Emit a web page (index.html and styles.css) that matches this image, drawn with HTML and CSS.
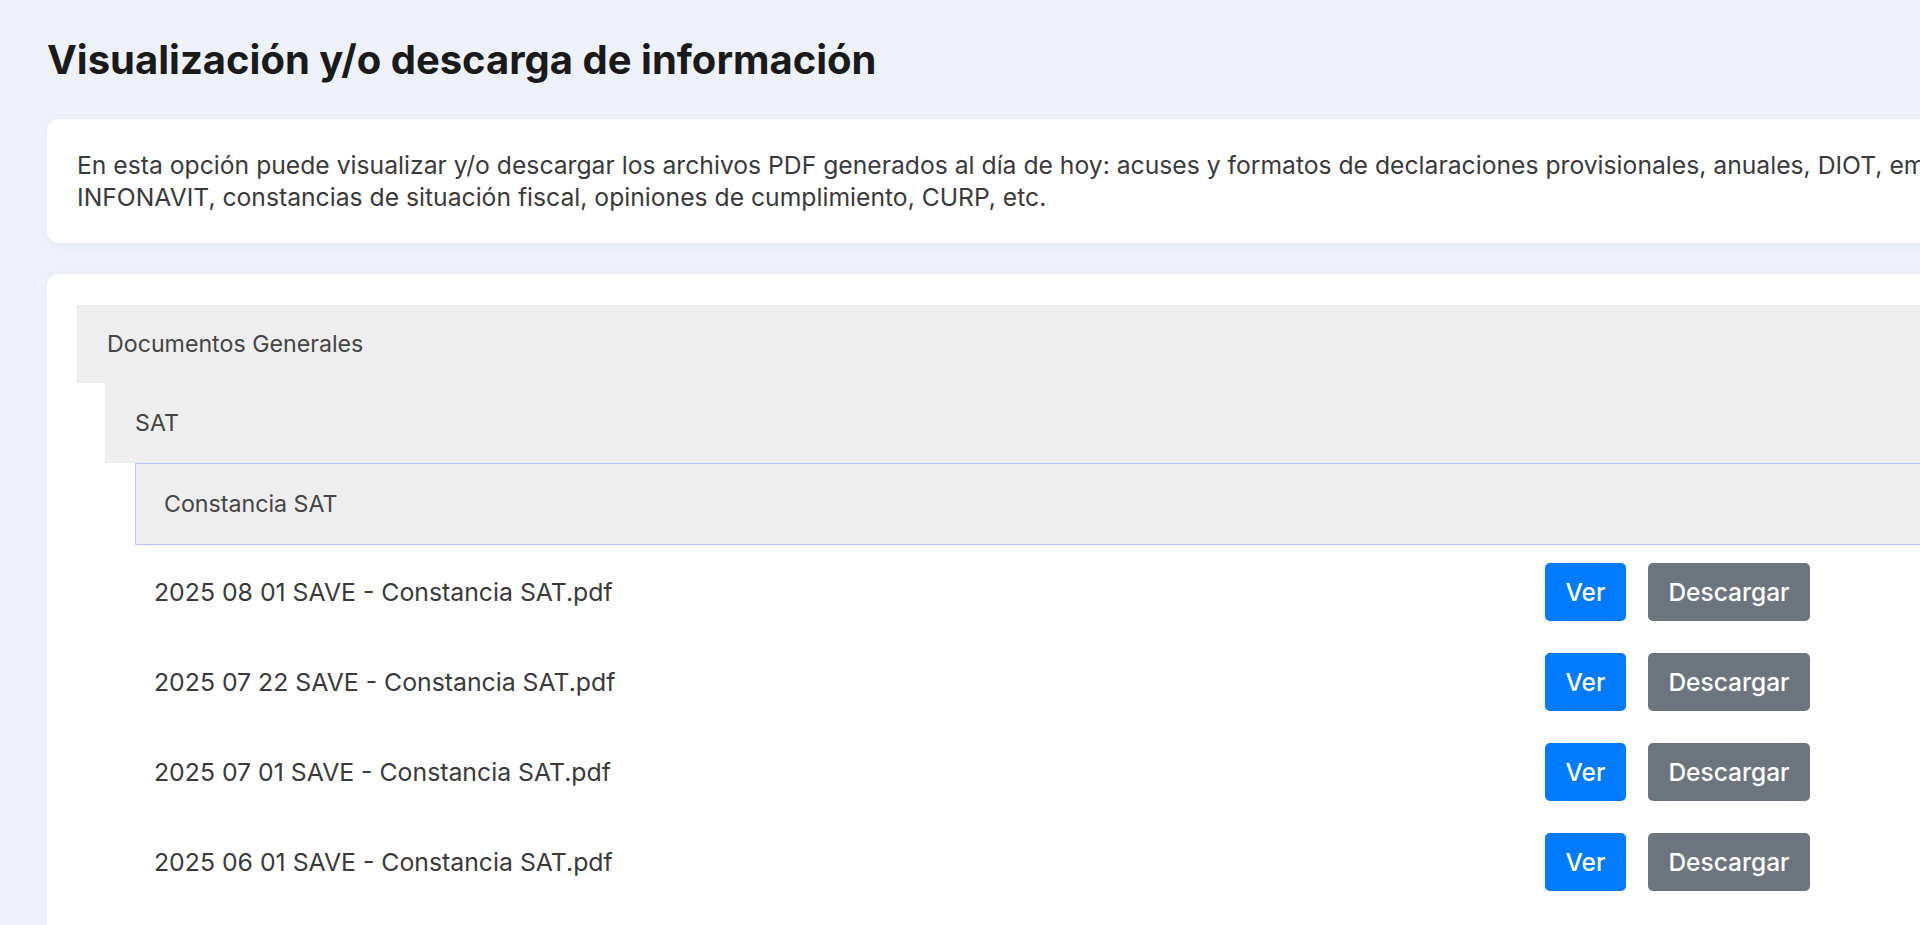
FILE: index.html
```html
<!DOCTYPE html>
<html lang="es">
<head>
    <meta charset="UTF-8">
    <meta name="viewport" content="width=device-width, initial-scale=1.0">
    <title>Visualización y/o descarga de información</title>
    <link rel="stylesheet" href="styles.css">
</head>
<body>

<div class="page">
    <h1 class="page-title">Visualización y/o descarga de información</h1>

    <div class="card intro">
        <p>En esta opción puede visualizar y/o descargar los archivos PDF generados al día de hoy: acuses y formatos de declaraciones provisionales, anuales, DIOT, empleados, IMSS e INFONAVIT, constancias de situación fiscal, opiniones de cumplimiento, CURP, etc.</p>
    </div>

    <div class="card docs">
        <div class="group">
            <div class="group-title">Documentos Generales</div>
            <div class="group-body">
                <div class="group">
                    <div class="group-title">SAT</div>
                    <div class="group-body">
                        <div class="group">
                            <div class="group-title active">Constancia SAT</div>
                            <div class="file-list">
                                <div class="file-row">
                                    <span class="file-name">2025 08 01 SAVE - Constancia SAT.pdf</span>
                                    <div class="actions">
                                        <button class="btn btn-primary">Ver</button>
                                        <button class="btn btn-secondary">Descargar</button>
                                    </div>
                                </div>
                                <div class="file-row">
                                    <span class="file-name">2025 07 22 SAVE - Constancia SAT.pdf</span>
                                    <div class="actions">
                                        <button class="btn btn-primary">Ver</button>
                                        <button class="btn btn-secondary">Descargar</button>
                                    </div>
                                </div>
                                <div class="file-row">
                                    <span class="file-name">2025 07 01 SAVE - Constancia SAT.pdf</span>
                                    <div class="actions">
                                        <button class="btn btn-primary">Ver</button>
                                        <button class="btn btn-secondary">Descargar</button>
                                    </div>
                                </div>
                                <div class="file-row">
                                    <span class="file-name">2025 06 01 SAVE - Constancia SAT.pdf</span>
                                    <div class="actions">
                                        <button class="btn btn-primary">Ver</button>
                                        <button class="btn btn-secondary">Descargar</button>
                                    </div>
                                </div>
                            </div>
                        </div>
                    </div>
                </div>
            </div>
        </div>
    </div>
</div>

</body>
</html>
```

FILE: styles.css
```css
html, body {
    height: 100%;
}
body {
    font-family: Inter, "Noto Sans", sans-serif;
    margin: 0;
    padding: 0;
    background-color: #eef1f9;
    color: #333;
    overflow: hidden;
}
.page {
    width: 2150px;
    padding: 37px 0 0 47px;
}
.page-title {
    font-size: 40px;
    font-weight: 700;
    line-height: 46px;
    color: #1a1a1a;
    margin: 0 0 36px 0;
}
.card {
    background-color: #fff;
    border-radius: 12px;
    box-shadow: 0 2px 10px rgba(60, 70, 120, 0.05);
    padding: 30px;
}
.intro {
    margin-bottom: 31px;
}
.intro p {
    margin: 0;
    font-size: 24.7px;
    line-height: 32px;
    color: #3a3a3a;
}
.docs {
    padding-top: 31px;
    min-height: 900px;
}
.group-title {
    background-color: #eeeeee;
    font-size: 23.2px;
    line-height: 30px;
    color: #444;
    padding: 24px 30px;
}
.group-body {
    padding-left: 28px;
}
.group-body .group-title {
    padding-top: 25px;
    padding-bottom: 25px;
}
.group-title.active {
    border: 1px solid #b6c5f3;
    border-right: none;
    padding: 25px 28px;
    margin-left: 2px;
}
.file-list {
    padding-left: 21px;
    padding-top: 2px;
}
.file-row {
    display: grid;
    grid-template-columns: 1391px auto;
    align-items: center;
    height: 90px;
}
.file-name {
    font-size: 24.8px;
    color: #3a3a3a;
}
.actions {
    display: flex;
    gap: 22px;
}
.btn {
    font-family: Inter, "Noto Sans", sans-serif;
    font-size: 24.5px;
    font-weight: 500;
    height: 58px;
    border: none;
    border-radius: 5px;
    color: #fff;
    cursor: pointer;
    padding: 0;
}
.btn-primary {
    width: 81px;
    background-color: #007bff;
}
.btn-secondary {
    width: 162px;
    background-color: #6c757d;
}
```
